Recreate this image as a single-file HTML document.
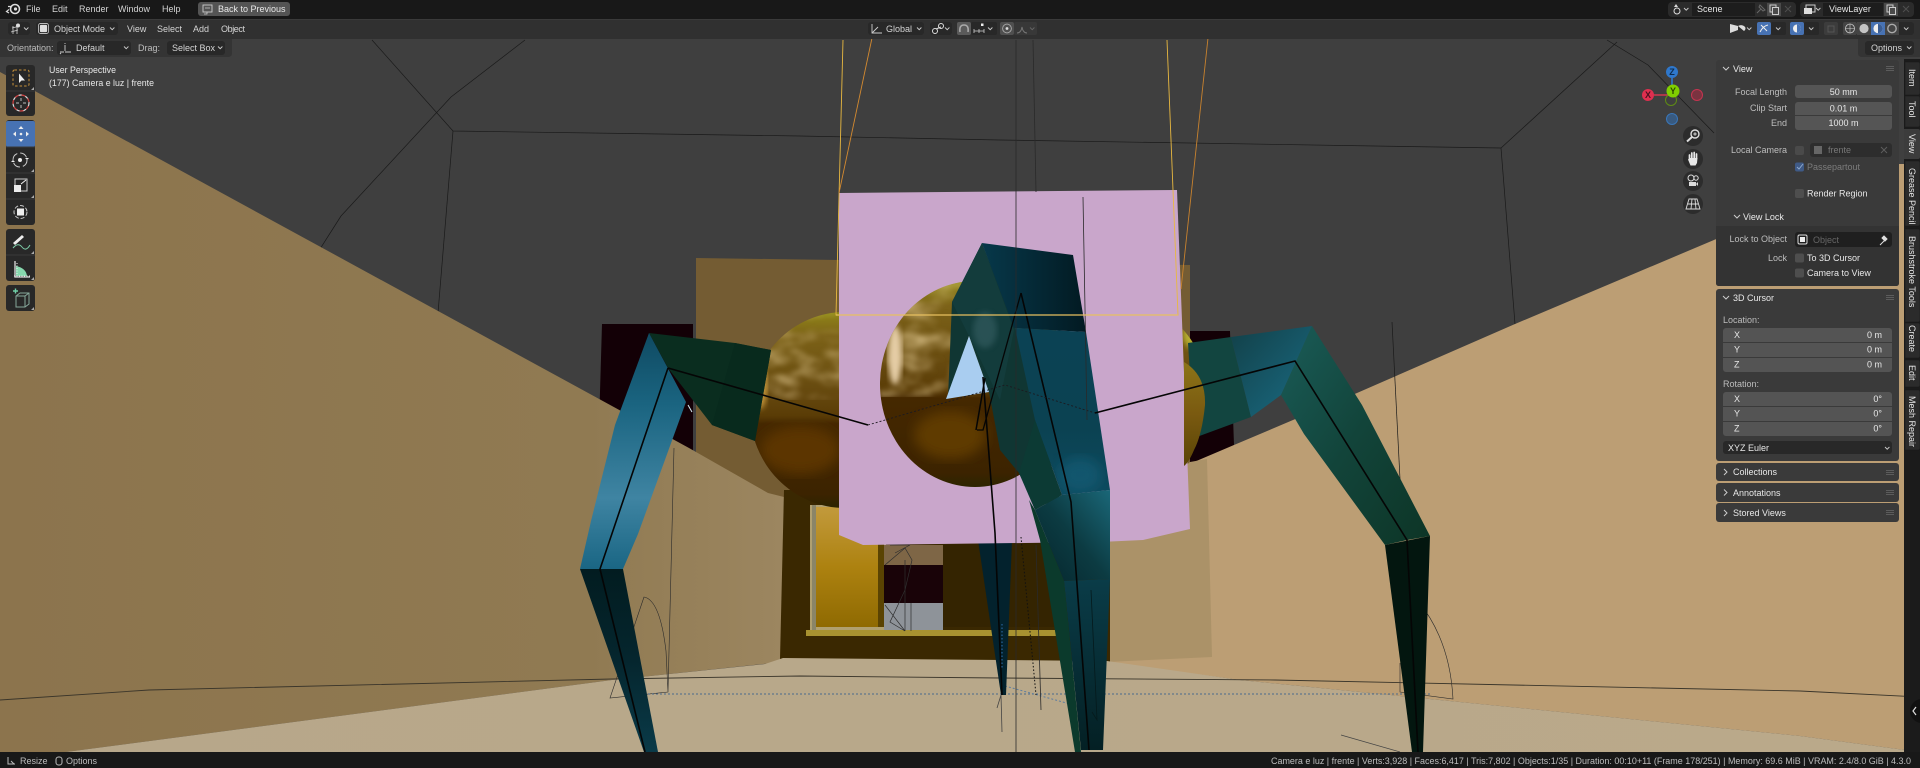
<!DOCTYPE html>
<html><head><meta charset="utf-8"><title>Blender</title>
<style>
html,body{margin:0;padding:0;background:#181818;width:1920px;height:768px;overflow:hidden}
svg{display:block}
text{font-family:"Liberation Sans",sans-serif;font-size:9px;fill:#d4d4d4}
.d{fill:#bdbdbd}.w{fill:#e8e8e8}.g{fill:#8a8a8a}
.m{text-anchor:middle}.e{text-anchor:end}
.wr{fill:none;stroke:#1a1a1a;stroke-width:.7}
.ic{fill:none;stroke:#ddd;stroke-width:1}
</style></head><body>
<svg width="1920" height="768" viewBox="0 0 1920 768" xmlns="http://www.w3.org/2000/svg">
<defs>
<linearGradient id="lw" x1="0" y1="0" x2="1" y2="0"><stop offset="0" stop-color="#8c744d"/><stop offset=".75" stop-color="#907a52"/><stop offset="1" stop-color="#9c8660"/></linearGradient>
<linearGradient id="fl" x1="0" y1="0" x2="1" y2="0"><stop offset="0" stop-color="#b7a78a"/><stop offset="1" stop-color="#baa98a"/></linearGradient>
<linearGradient id="sph1" x1="0" y1="0" x2="0" y2="1"><stop offset="0" stop-color="#8f8c10"/><stop offset=".04" stop-color="#8a7a18"/><stop offset=".12" stop-color="#7c6218"/><stop offset=".42" stop-color="#65480e"/><stop offset=".53" stop-color="#5a3c06"/><stop offset=".57" stop-color="#452800"/><stop offset=".93" stop-color="#3c2300"/><stop offset="1" stop-color="#2c2400"/></linearGradient>
<linearGradient id="gold" x1="0" y1="0" x2="0" y2="1"><stop offset="0" stop-color="#c29a3c"/><stop offset=".5" stop-color="#ad8210"/><stop offset="1" stop-color="#8f6a02"/></linearGradient>
<linearGradient id="legU" x1="0" y1="0" x2="0" y2="1"><stop offset="0" stop-color="#0f4a62"/><stop offset=".3" stop-color="#1a6480"/><stop offset=".7" stop-color="#3f84a2"/><stop offset="1" stop-color="#1a6684"/></linearGradient>
<linearGradient id="legL" x1="0" y1="0" x2="0" y2="1"><stop offset="0" stop-color="#021c20"/><stop offset=".5" stop-color="#05262e"/><stop offset="1" stop-color="#0a3a48"/></linearGradient>
<linearGradient id="cTop" x1="0" y1="0" x2="1" y2="0"><stop offset="0" stop-color="#07384a"/><stop offset="1" stop-color="#021a22"/></linearGradient>
<linearGradient id="cMid" x1="0" y1="0" x2="0" y2="1"><stop offset="0" stop-color="#0b4254"/><stop offset=".6" stop-color="#0b4252"/><stop offset="1" stop-color="#0d4a5e"/></linearGradient>
<linearGradient id="cLow" x1="1" y1="0" x2="0" y2="1"><stop offset="0" stop-color="#1a6778"/><stop offset=".5" stop-color="#0c3b42"/><stop offset="1" stop-color="#05252c"/></linearGradient>
<linearGradient id="cBot" x1="0" y1="0" x2="0" y2="1"><stop offset="0" stop-color="#0a3c48"/><stop offset="1" stop-color="#042024"/></linearGradient>
<linearGradient id="rLeg" x1="0" y1="0" x2="1" y2="1"><stop offset="0" stop-color="#1a5c58"/><stop offset=".5" stop-color="#12443a"/><stop offset="1" stop-color="#0d3526"/></linearGradient>
<linearGradient id="rArm" x1="0" y1="0" x2="1" y2="1"><stop offset="0" stop-color="#124048"/><stop offset="1" stop-color="#1a6c84"/></linearGradient>
<linearGradient id="cres" x1="0" y1="0" x2="0" y2="1"><stop offset="0" stop-color="#8c7418"/><stop offset=".5" stop-color="#7a5a10"/><stop offset="1" stop-color="#5a4406"/></linearGradient>
<filter id="b3"><feGaussianBlur stdDeviation="3"/></filter>
<filter id="b6"><feGaussianBlur stdDeviation="6"/></filter>
<filter id="cloud" x="0" y="0" width="100%" height="100%">
<feTurbulence type="fractalNoise" baseFrequency=".03 .06" numOctaves="3" seed="7"/>
<feColorMatrix values="0 0 0 0 .78  0 0 0 0 .6  0 0 0 0 .3  2.2 0 0 0 -.95"/>
<feGaussianBlur stdDeviation="2"/>
</filter>
<clipPath id="cs"><ellipse cx="975" cy="384" rx="95" ry="103"/></clipPath>
<clipPath id="ls"><ellipse cx="845" cy="410" rx="95" ry="98"/></clipPath>
<clipPath id="rs"><ellipse cx="1110" cy="392" rx="97" ry="95"/></clipPath>
<clipPath id="cm"><polygon points="1015,328 1086,332 1110,490 1062,495"/></clipPath>
</defs>

<!-- viewport background -->
<rect width="1920" height="768" fill="#3f3f3f"/>
<g class="wr">
<path d="M372 40L453 131L800 136L1000 140L1501 148L1515 324"/>
<path d="M525 40L451 97L341 216L250 359L186 515L149 690L148 752"/>
<path d="M453 131L438 313"/>
<path d="M1501 148L1617 42"/>
<path d="M1607 40L1648 65L1714 133"/>
</g>

<!-- back tan square and maroon -->
<polygon points="602,324 693,324 693,460 598,460" fill="#130006"/>
<polygon points="696,258 1190,265 1190,500 696,500" fill="#745c33"/>
<polygon points="1190,331 1230,331 1234,445 1190,465" fill="#130006"/>

<!-- left wall -->
<polygon points="0,72 689,448 768,493 784,497 782,662 612,680 66,752 0,752" fill="url(#lw)"/>
<!-- right wall -->
<polygon points="1920,153 1515,324 1357,393 1293,420 1234,445 1194,462 1194,530 1110,540 1107,662 1240,680 1800,736 1920,752" fill="#bc9e74"/>
<polygon points="1190,462 1207,459 1212,657 1107,662 1107,530" fill="#ab9268"/>

<!-- window frame -->
<polygon points="784,490 1110,490 1110,662 780,659" fill="#3a2801"/>
<rect x="810" y="505" width="76" height="131" fill="#b0a070"/>
<rect x="812" y="505" width="4" height="127" fill="#8a8568"/>
<rect x="816" y="507" width="62" height="120" fill="url(#gold)"/>
<rect x="878" y="507" width="6" height="120" fill="#5a4302"/>
<rect x="884" y="545" width="59" height="20" fill="#7e6646"/>
<rect x="884" y="565" width="59" height="38" fill="#190308"/>
<rect x="884" y="603" width="59" height="28" fill="#8e9399"/>
<rect x="943" y="543" width="112" height="84" fill="#342401"/>
<polygon points="806,630 1060,630 1056,636 806,636" fill="#a89230"/>
<g stroke="#2e2e2e" stroke-width=".7" fill="none"><path d="M885 565L905 548L912 560L905 590L890 622L905 631M895 553L910 545L890 545M885 605L905 631M905 560V631M911 603V631"/></g>

<!-- floor -->
<polygon points="66,752 612,680 765,664 783,658 1107,661 1240,680 1800,736 1920,752" fill="url(#fl)"/>

<!-- back spheres -->
<ellipse cx="845" cy="410" rx="95" ry="98" fill="url(#sph1)"/>
<g clip-path="url(#ls)">
<rect x="750" y="312" width="95" height="88" filter="url(#cloud)" opacity=".7"/>
<ellipse cx="760" cy="385" rx="7" ry="24" fill="#c8983a" filter="url(#b3)"/>
<ellipse cx="800" cy="450" rx="40" ry="24" fill="#5c3606" filter="url(#b6)"/>
</g>
<ellipse cx="1110" cy="392" rx="97" ry="95" fill="url(#sph1)"/>
<g clip-path="url(#rs)"><ellipse cx="1195" cy="335" rx="12" ry="14" fill="#b8b030" filter="url(#b3)"/></g>

<!-- wires behind -->
<path d="M674 448L668 692L610 698L644 597Q660 600 666 651L668 692" fill="none" stroke="#2a2a2a" stroke-width=".6"/>
<path d="M1400 663L1400 692L1453 699Q1450 640 1418 601" fill="none" stroke="#2a2a2a" stroke-width=".6"/>
<path d="M1392 322L1400 479" class="wr"/>

<!-- horizontal floor line -->
<path d="M0 700L149 690L612 679L800 676L1000 678L1275 680L1800 691L1920 697" fill="none" stroke="#3a352a" stroke-width=".9"/>
<path d="M640 694H1430" fill="none" stroke="#4a6a8c" stroke-width="1" stroke-dasharray="2 2"/>
<path d="M1005 686L1070 704" fill="none" stroke="#5b7ca0" stroke-width="1" stroke-dasharray="2 2"/>
<path d="M1001 695L1002 732M1001 695L997 708" fill="none" stroke="#444" stroke-width=".8"/>
<path d="M1341 735L1400 752" fill="none" stroke="#444" stroke-width=".7"/>

<!-- back thin center leg -->
<polygon points="978,540 1012,540 1006,695 1001,695" fill="#03222d"/>

<!-- pink plane -->
<polygon points="839,193 1177,190 1190,529 1143,540 1100,542 863,545 839,535" fill="#c9a6cb"/>

<!-- center sphere -->
<ellipse cx="975" cy="384" rx="95" ry="103" fill="url(#sph1)"/>
<g clip-path="url(#cs)">
<rect x="880" y="281" width="190" height="116" filter="url(#cloud)" opacity=".7"/>
<ellipse cx="895" cy="355" rx="7" ry="30" fill="#e4cca4" filter="url(#b3)"/>
<ellipse cx="950" cy="435" rx="36" ry="24" fill="#5e3a04" filter="url(#b6)"/>
</g>

<!-- center leg -->
<polygon points="982,243 952,302 948,398 969,336 989,392 1000,450 1019,473 1035,507 1060,500 1020,340" fill="#103633"/>
<polygon points="982,243 952,302 969,336 1000,400 1014,330" fill="#133c3c"/>
<ellipse cx="985" cy="330" rx="12" ry="18" fill="#3a6468" opacity=".55" filter="url(#b3)"/>
<polygon points="969,336 946,399 989,392" fill="#a9cdf0"/>
<polygon points="982,243 1073,255 1086,332 1014,328" fill="url(#cTop)"/>
<polygon points="1015,328 1086,332 1110,490 1062,495 1035,420" fill="url(#cMid)"/>
<ellipse cx="1080" cy="475" rx="22" ry="18" fill="#16607a" opacity=".6" filter="url(#b6)" clip-path="url(#cm)"/>
<polygon points="1035,510 1062,495 1110,490 1110,579 1064,581" fill="url(#cLow)"/>
<polygon points="1064,581 1110,579 1103,750 1081,750" fill="url(#cBot)"/>
<polygon points="1029,500 1035,510 1064,581 1081,752 1075,752 1040,540" fill="#0b3a2c"/>
<polygon points="1019,473 1035,510 1062,495 1035,420" fill="#0c3a34"/>
<path d="M1091 590L1097 720L1092 712" fill="none" stroke="#051a1c" stroke-width=".8"/>

<!-- left leg -->
<polygon points="649,333 735,343 771,350 755,441 712,425 668,368" fill="#0a2d1f"/>
<polygon points="735,343 771,350 755,441 712,425" fill="#082a1d"/>
<polygon points="649,333 686,402 638,534 623,569 580,569 591,521 615,425" fill="url(#legU)"/>
<polygon points="580,569 623,569 658,752 644,752" fill="url(#legL)"/>
<path d="M688 405L692 412" stroke="#d8f0f8" stroke-width="1"/>

<!-- right arm and leg -->
<polygon points="1188,343 1231,337 1251,417 1194,438" fill="#124540"/>
<polygon points="1231,337 1312,326 1296,362 1281,395 1251,417" fill="url(#rArm)"/>
<polygon points="1312,326 1362,405 1430,536 1407,540 1385,545 1304,434 1281,395" fill="url(#rLeg)"/>
<polygon points="1385,545 1430,536 1423,752 1412,752" fill="#03160f"/>
<!-- sphere crescent right of pink -->
<path d="M1184 362Q1206 375 1205 405Q1202 435 1194 450Q1189 462 1184 466Z" fill="url(#cres)"/>

<!-- bones -->
<g fill="none" stroke="#050505" stroke-width="1.600">
<path d="M668 368L868 425"/>
<path d="M668 368L600 569L645 752"/>
<path d="M1095 413L1295 361L1407 540L1418 752"/>
<path d="M1021 293L1071 502L1089 750"/>
<path d="M1021 293L983 430L977 430" stroke-width="1.300"/>
<path d="M983 377L995 533L1002 695"/>
<path d="M985 378L976 430" stroke-width="1.500"/>
</g>
<path d="M868 425L1005 385L1095 413" fill="none" stroke="#1c1a20" stroke-width=".9" stroke-dasharray="2 2"/>
<path d="M1021 537L1036 695" fill="none" stroke="#111" stroke-width="1" stroke-dasharray="1.500 2"/>
<path d="M1002 624V668" fill="none" stroke="#2f6fae" stroke-width="1" stroke-dasharray="1.500 2"/>

<!-- vertical wires -->
<path d="M1016 40V768" fill="none" stroke="#2a2a2a" stroke-width=".8"/>
<path d="M1033 40L1036 192M1083 197L1087 420M1036 545L1041 710" fill="none" stroke="#2a2a2a" stroke-width=".8"/>

<!-- camera frame -->
<g fill="none">
<path d="M843 40L836 315H1178L1167 40" stroke="#e8b840" stroke-width=".9"/>
<path d="M836 315H1178" stroke="#e8c060" stroke-width="1.200"/>
<path d="M872 38L839 193" stroke="#d48a30" stroke-width=".9"/>
<path d="M1208 38L1181 289" stroke="#c8822e" stroke-width=".9"/>
</g>

<!-- ============ UI ============ -->
<rect width="1920" height="19" fill="#181818"/>
<rect y="19" width="1920" height="20" fill="#303030"/>
<rect y="19" width="1920" height="1" fill="#3a3a3a"/>
<path d="M0 39H232V53Q232 57 228 57H0Z" fill="#333" opacity=".9"/>
<path d="M1920 39H1858V53Q1858 57 1862 57H1920Z" fill="#333" opacity=".9"/>

<!-- blender logo -->
<g><circle cx="15" cy="9" r="4.500" fill="none" stroke="#ddd" stroke-width="1.600"/><circle cx="15.500" cy="9" r="1.600" fill="#ddd"/><path d="M8 6.500H12M9 9.500L6.500 11.500L9 13" stroke="#ddd" stroke-width="1.200" fill="none"/></g>
<text x="26" y="12">File</text><text x="52" y="12">Edit</text><text x="79" y="12">Render</text><text x="118" y="12">Window</text><text x="162" y="12">Help</text>
<rect x="198" y="2" width="92" height="14" rx="3" fill="#545454"/>
<rect x="203" y="5" width="9" height="7" fill="none" stroke="#ccc" stroke-width=".9"/><path d="M205 8h5M207 12v2h-3" stroke="#ccc" stroke-width=".8" fill="none"/>
<text x="218" y="12" class="w">Back to Previous</text>

<!-- header row left -->
<rect x="8" y="22" width="22" height="13" rx="3" fill="#282828"/>
<path d="M11 32L18 30M12 28L20 26M13 26V34M17 26V34" stroke="#ccc" stroke-width=".8" fill="none"/><circle cx="18" cy="25.500" r="2" fill="#ddd"/><path d="M24 27.500l2.200 2.200 2.200-2.200" stroke="#ccc" fill="none" stroke-width=".9"/>
<rect x="36" y="22" width="82" height="13" rx="3" fill="#282828"/>
<rect x="39.500" y="24.500" width="8" height="8" rx="1.500" fill="#ddd" stroke="#282828" stroke-width=".8"/><rect x="38.500" y="23.500" width="10" height="10" rx="2" fill="none" stroke="#bbb" stroke-width=".9"/>
<text x="54" y="32">Object Mode</text><path d="M110 27.500l2.200 2.200 2.200-2.200" stroke="#ccc" fill="none" stroke-width=".9"/>
<text x="127" y="32">View</text><text x="157" y="32">Select</text><text x="193" y="32">Add</text><text x="221" y="32" textLength="24">Object</text>

<!-- header row center -->
<rect x="868" y="22" width="56" height="13" rx="3" fill="#282828"/>
<path d="M872 24V33H882M872 33L878 27" stroke="#ccc" fill="none" stroke-width=".9"/>
<text x="886" y="32">Global</text><path d="M917 27.500l2.200 2.200 2.200-2.200" stroke="#ccc" fill="none" stroke-width=".9"/>
<rect x="930" y="22" width="22" height="13" rx="3" fill="#282828"/>
<circle cx="935" cy="31" r="2.500" class="ic"/><circle cx="941" cy="26" r="2.500" class="ic"/><path d="M936 29L941 27" class="ic"/><path d="M945 27.500l2.200 2.200 2.200-2.200" stroke="#ccc" fill="none" stroke-width=".9"/>
<rect x="957" y="22" width="14" height="13" rx="2" fill="#5a5a5a"/><path d="M960 32Q959 25 964 25Q969 25 968 32" fill="none" stroke="#aaa" stroke-width="1.600"/>
<rect x="971" y="22" width="26" height="13" rx="2" fill="#282828"/>
<path d="M974 31H984M974 29V33M979 29V33M984 29V33" stroke="#ccc" fill="none" stroke-width=".8"/><rect x="981" y="23.500" width="2.500" height="2.500" fill="#eee"/><path d="M988 27.500l2.200 2.200 2.200-2.200" stroke="#ccc" fill="none" stroke-width=".9"/>
<rect x="1000" y="22" width="14" height="13" rx="2" fill="#4f4f4f"/><circle cx="1007" cy="28.500" r="4.400" fill="none" stroke="#aaa" stroke-width=".9"/><circle cx="1007" cy="28.500" r="1.400" fill="#ddd"/>
<rect x="1014" y="22" width="23" height="13" rx="2" fill="#383838"/><path d="M1017 33Q1021 33 1022 27Q1023 33 1027 33" stroke="#777" fill="none" stroke-width=".9"/><path d="M1030 27.500l2.200 2.200 2.200-2.200" stroke="#666" fill="none" stroke-width=".9"/>

<!-- header row right -->
<path d="M1730 24l8 2v4l-8 3zM1738 26a4 3 0 1 1 6 5" fill="#ddd"/><path d="M1747 27.500l2.200 2.200 2.200-2.200" stroke="#ccc" fill="none" stroke-width=".9"/>
<rect x="1757" y="22" width="14" height="13" rx="2" fill="#4772b3"/><path d="M1760 32Q1763 26 1768 25M1761 25l6 6" stroke="#eee" fill="none" stroke-width="1"/>
<rect x="1771" y="22" width="15" height="13" rx="2" fill="#282828"/><path d="M1776 27.500l2.200 2.200 2.200-2.200" stroke="#ccc" fill="none" stroke-width=".9"/>
<rect x="1790" y="22" width="14" height="13" rx="2" fill="#4772b3"/><circle cx="1797" cy="28.500" r="4" fill="#eee"/><path d="M1797 24.500a4 4 0 0 1 0 8z" fill="#4772b3"/>
<rect x="1804" y="22" width="15" height="13" rx="2" fill="#282828"/><path d="M1809 27.500l2.200 2.200 2.200-2.200" stroke="#ccc" fill="none" stroke-width=".9"/>
<rect x="1824" y="22" width="14" height="13" rx="2" fill="#3c3c3c"/><rect x="1828" y="26" width="6" height="6" fill="none" stroke="#555"/>
<rect x="1843" y="22" width="71" height="13" rx="3" fill="#282828"/>
<rect x="1843" y="22" width="14" height="13" rx="2" fill="#444"/>
<circle cx="1850" cy="28.500" r="4.500" fill="none" stroke="#ccc" stroke-width=".8"/><path d="M1845.500 28.500h9M1850 24v9" stroke="#ccc" stroke-width=".6"/>
<rect x="1857" y="22" width="14" height="13" fill="#444"/><circle cx="1864" cy="28.500" r="4.600" fill="#c4c4c4"/>
<rect x="1871" y="22" width="14" height="13" fill="#4772b3"/><circle cx="1878" cy="28.500" r="4.600" fill="#eee"/><path d="M1878 23.900a4.600 4.600 0 0 1 0 9.200z" fill="#3a5c92"/>
<rect x="1885" y="22" width="14" height="13" fill="#444"/><circle cx="1892" cy="28.500" r="4.200" fill="none" stroke="#aaa" stroke-width="1.400"/>
<path d="M1904 27.500l2.200 2.200 2.200-2.200" stroke="#ccc" fill="none" stroke-width=".9"/>

<!-- Top right scene -->
<rect x="1668" y="2" width="128" height="15" rx="4" fill="#2b2b2b"/>
<rect x="1692" y="3" width="63" height="13" fill="#1d1d1d"/>
<circle cx="1677" cy="11" r="3" fill="none" stroke="#ddd"/><path d="M1674 7l2-3 2 3" fill="#ddd"/><path d="M1684 8l2.200 2.200 2.200-2.200" stroke="#ccc" fill="none" stroke-width=".9"/>
<text x="1697" y="12" class="w">Scene</text>
<path d="M1757 13l4-4M1760 5l5 5-2 1-4-4z" stroke="#666" fill="none"/>
<rect x="1767" y="3" width="14" height="13" fill="#4a4a4a"/><rect x="1770" y="5" width="6" height="7" fill="none" stroke="#ccc"/><rect x="1772.500" y="7.500" width="6" height="7" fill="#4a4a4a" stroke="#ccc"/>
<path d="M1785 6l6 6M1791 6l-6 6" stroke="#4e4e4e"/>
<rect x="1800" y="2" width="114" height="15" rx="4" fill="#2b2b2b"/>
<rect x="1823" y="3" width="60" height="13" fill="#1d1d1d"/>
<rect x="1806" y="5" width="9" height="7" fill="none" stroke="#ccc"/><rect x="1804" y="8" width="8" height="6" fill="#ddd"/><path d="M1816 8l2.200 2.200 2.200-2.200" stroke="#ccc" fill="none" stroke-width=".9"/>
<text x="1829" y="12" class="w">ViewLayer</text>
<rect x="1884" y="3" width="14" height="13" fill="#4a4a4a"/><rect x="1887" y="5" width="6" height="7" fill="none" stroke="#ccc"/><rect x="1889.500" y="7.500" width="6" height="7" fill="#4a4a4a" stroke="#ccc"/>
<path d="M1903 6l6 6M1909 6l-6 6" stroke="#4e4e4e"/>

<!-- tool settings -->
<text x="7" y="51" class="d">Orientation:</text>
<rect x="57" y="41" width="74" height="14" rx="3" fill="#282828"/>
<path d="M65 45v6M60 52h4M65 52h6M61 54l-1-1M65 43v1" stroke="#ccc" stroke-width=".9" fill="none"/>
<text x="76" y="51">Default</text><path d="M124 46.500l2.200 2.200 2.200-2.200" stroke="#ccc" fill="none" stroke-width=".9"/>
<text x="138" y="51" class="d">Drag:</text>
<rect x="167" y="41" width="58" height="14" rx="3" fill="#282828"/>
<text x="172" y="51">Select Box</text><path d="M218 46.500l2.200 2.200 2.200-2.200" stroke="#ccc" fill="none" stroke-width=".9"/>
<rect x="1865" y="41" width="49" height="14" rx="3" fill="#282828"/>
<text x="1871" y="51">Options</text><path d="M1907 46.500l2.200 2.200 2.200-2.200" stroke="#ccc" fill="none" stroke-width=".9"/>

<!-- overlay text -->
<text x="49" y="73" class="w" style="font-size:8.800px">User Perspective</text>
<text x="49" y="86" class="w" style="font-size:8.800px">(177) Camera e luz | frente</text>

<!-- toolbar -->
<rect x="6" y="65" width="29" height="51" rx="3" fill="#282828"/>
<rect x="6" y="120" width="29" height="105" rx="3" fill="#282828"/>
<rect x="6" y="229" width="29" height="52" rx="3" fill="#282828"/>
<rect x="6" y="285" width="29" height="26" rx="3" fill="#282828"/>
<rect x="6" y="121" width="29" height="26" rx="2" fill="#4772b3"/>
<path d="M6 91H35M6 173H35M6 199H35M6 147H35M6 255H35" stroke="#3a3a3a"/>
<rect x="13" y="70" width="16" height="16" rx="1.500" fill="none" stroke="#c6913a" stroke-dasharray="2.500 2"/>
<path d="M19 73.500V83L21.500 80.500L25 80.500Z" fill="#eee"/>
<circle cx="21" cy="103" r="8" fill="none" stroke="#ddd" stroke-width="1.200" stroke-dasharray="4 3"/><circle cx="21" cy="103" r="8" fill="none" stroke="#d04040" stroke-width="1.200" stroke-dasharray="4 3" stroke-dashoffset="4"/>
<path d="M21 98v3M21 105v3M16 103h3M23 103h3" stroke="#bbb"/>
<g fill="#eee"><path d="M21 126l-2.500 3h5zM21 142l-2.500-3h5zM13 134l3-2.500v5zM29 134l-3-2.500v5z"/><circle cx="21" cy="134" r="1.300"/></g>
<circle cx="20" cy="160" r="7" fill="none" stroke="#ccc" stroke-dasharray="8 3"/><circle cx="20" cy="160" r="2" fill="#eee"/><path d="M13 160l-2 2h4zM27 160l-2-2h4z" fill="#eee"/>
<rect x="15" y="179" width="12" height="12" fill="none" stroke="#ccc"/><rect x="14" y="185" width="7" height="7" fill="#eee"/><path d="M21 184l5-4" stroke="#eee"/>
<circle cx="20.500" cy="212" r="6.500" fill="none" stroke="#ccc" stroke-dasharray="4 2"/><rect x="17" y="208.500" width="7" height="7" fill="#eee"/>
<path d="M13 243l9-8 2 2-9 8z" fill="#eee"/><path d="M13 248q5-6 9-1t8-2" stroke="#7dcca8" fill="none"/>
<path d="M15 261V277H30" stroke="#ddd" fill="none" stroke-width="1.300"/><path d="M16 266Q26 268 27 276H16z" fill="#87d8ae"/>
<path d="M14 276h16M17 263v12" stroke="#eee" stroke-dasharray="1 1.500"/>
<path d="M13 291h5M15.500 288.500v5" stroke="#6fd0a8" stroke-width="1.400"/>
<path d="M16 296l4-3h9v11l-4 3h-9zM16 296h9v11M25 296l4-3" fill="none" stroke="#86a79a"/>
<g fill="#aaa"><path d="M34 90l-3 0 3-3zM34 172l-3 0 3-3zM34 198l-3 0 3-3zM34 254l-3 0 3-3zM34 280l-3 0 3-3zM34 310l-3 0 3-3z"/></g>

<!-- gizmo -->
<line x1="1672" y1="78" x2="1672" y2="91" stroke="#2f78cc" stroke-width="1.600"/>
<line x1="1654" y1="95" x2="1673" y2="95" stroke="#d2364f" stroke-width="1.600"/>
<circle cx="1697" cy="95" r="5.500" fill="#7a3340" stroke="#c63450" stroke-width="1"/>
<circle cx="1672" cy="119" r="5.500" fill="#385a80" stroke="#3a76b8" stroke-width="1"/>
<circle cx="1671" cy="100" r="5.500" fill="none" stroke="#5e8c14" stroke-width="1"/>
<circle cx="1672" cy="72" r="6" fill="#2f78cc"/><text x="1672" y="75" class="m" style="fill:#0d2c50;font-weight:bold">Z</text>
<circle cx="1648" cy="95" r="6" fill="#df2f4f"/><text x="1648" y="98" class="m" style="fill:#4a1020;font-weight:bold">X</text>
<circle cx="1673" cy="91" r="6.500" fill="#80d000"/><text x="1673" y="94" class="m" style="fill:#2c4a00;font-weight:bold">Y</text>
<g fill="#2c2c2c"><circle cx="1693" cy="136" r="10"/><circle cx="1693" cy="159" r="10"/><circle cx="1693" cy="181" r="10"/><circle cx="1693" cy="204" r="10"/></g>
<circle cx="1695" cy="134" r="4" fill="none" stroke="#ddd" stroke-width="1.400"/><path d="M1692 137l-5 4.500" stroke="#ddd" stroke-width="2"/><path d="M1695 132.300v3.400M1693.300 134h3.400" stroke="#ddd" stroke-width=".9"/>
<path d="M1689.500 158.500V155M1691.800 158V153M1694.200 158V152.500M1696.500 158.500V154" stroke="#e8e8e8" stroke-width="1.700" stroke-linecap="round" fill="none"/><path d="M1688 159.500l1.500-1.500h8l-.5 5-1.500 2.500h-5z" fill="#e8e8e8"/>
<circle cx="1691" cy="178" r="3" fill="none" stroke="#ddd"/><circle cx="1696" cy="178" r="2.200" fill="none" stroke="#ddd"/><rect x="1689" y="182" width="7" height="4" fill="#ddd"/><path d="M1698 182v4l-2-2z" fill="#ddd"/>
<path d="M1689 199h8l3 10h-14zM1688 204h10M1692 199l-1 10M1695 199l1 10" fill="none" stroke="#ddd" stroke-width=".9"/>

<!-- sidebar backdrops -->
<rect x="1904" y="59" width="16" height="693" fill="#1b1b1b"/>
<rect x="1899" y="59" width="5" height="105" fill="#3f3f3f"/>
<rect x="1716" y="60" width="183" height="226" rx="3" fill="#3a3a3a"/>
<path d="M1716 226H1899V283Q1899 286 1896 286H1719Q1716 286 1716 283Z" fill="#333"/>
<rect x="1716" y="289" width="183" height="172" rx="3" fill="#3a3a3a"/>
<rect x="1716" y="463" width="183" height="18" rx="3" fill="#3a3a3a"/>
<rect x="1716" y="483" width="183" height="19" rx="3" fill="#3a3a3a"/>
<rect x="1716" y="503" width="183" height="19" rx="3" fill="#3a3a3a"/>

<!-- View panel -->
<path d="M1723 67l3 3 3-3" stroke="#ccc" fill="none"/>
<text x="1733" y="72" class="w">View</text>
<g fill="#5c5c5c"><rect x="1886" y="66" width="8" height="1"/><rect x="1886" y="68" width="8" height="1"/><rect x="1886" y="70" width="8" height="1"/>
<rect x="1886" y="295" width="8" height="1"/><rect x="1886" y="297" width="8" height="1"/><rect x="1886" y="299" width="8" height="1"/>
<rect x="1886" y="470" width="8" height="1"/><rect x="1886" y="472" width="8" height="1"/><rect x="1886" y="474" width="8" height="1"/>
<rect x="1886" y="490" width="8" height="1"/><rect x="1886" y="492" width="8" height="1"/><rect x="1886" y="494" width="8" height="1"/>
<rect x="1886" y="510" width="8" height="1"/><rect x="1886" y="512" width="8" height="1"/><rect x="1886" y="514" width="8" height="1"/></g>
<text x="1787" y="95" class="e d">Focal Length</text>
<rect x="1795" y="85" width="97" height="13" rx="3" fill="#555"/><text x="1843.500" y="95" class="m w">50 mm</text>
<text x="1787" y="111" class="e d">Clip Start</text>
<path d="M1795 105a3 3 0 0 1 3-3h91a3 3 0 0 1 3 3v10h-97z" fill="#555"/><text x="1843.500" y="111.500" class="m w">0.01 m</text>
<text x="1787" y="126" class="e d">End</text>
<path d="M1795 116h97v11a3 3 0 0 1-3 3h-91a3 3 0 0 1-3-3z" fill="#555"/><text x="1843.500" y="126" class="m w">1000 m</text>

<text x="1787" y="153" class="e d">Local Camera</text>
<rect x="1795" y="146" width="9" height="9" rx="2" fill="#4a4a4a"/>
<rect x="1810" y="143" width="82" height="14" rx="3" fill="#2d2d2d"/>
<rect x="1814" y="146" width="8" height="8" fill="#666"/><text x="1828" y="153" style="fill:#777">frente</text>
<path d="M1881 147l6 6M1887 147l-6 6" stroke="#5e5e5e"/>
<rect x="1795" y="162.500" width="9" height="9" rx="2" fill="#3f5a86"/><path d="M1797 167l2 2 4-5" stroke="#8ea8cc" fill="none"/>
<text x="1807" y="170" style="fill:#7c7c7c">Passepartout</text>
<rect x="1795" y="189" width="9" height="9" rx="2" fill="#4e4e4e"/><text x="1807" y="196.500" class="w">Render Region</text>
<path d="M1734 215l3 3 3-3" stroke="#ccc" fill="none"/>
<text x="1743" y="220" class="w">View Lock</text>
<text x="1787" y="242" class="e d">Lock to Object</text>
<rect x="1795" y="232" width="97" height="15" rx="3" fill="#1f1f1f"/>
<rect x="1798" y="235" width="9" height="9" rx="1.500" fill="none" stroke="#ddd"/><rect x="1800" y="237" width="5" height="5" fill="#eee"/>
<text x="1813" y="243" style="fill:#666">Object</text>
<path d="M1880 245l5-5M1884 236l3 3-2 2-3-3z" stroke="#ddd" fill="#ddd"/>
<text x="1787" y="261" class="e d">Lock</text>
<rect x="1795" y="253.500" width="9" height="9" rx="2" fill="#4e4e4e"/><text x="1807" y="261" class="w">To 3D Cursor</text>
<rect x="1795" y="268.500" width="9" height="9" rx="2" fill="#4e4e4e"/><text x="1807" y="276" class="w">Camera to View</text>

<!-- 3D Cursor -->
<path d="M1723 296l3 3 3-3" stroke="#ccc" fill="none"/>
<text x="1733" y="301" class="w">3D Cursor</text>
<text x="1723" y="323" class="d">Location:</text>
<path d="M1723 331a3 3 0 0 1 3-3h163a3 3 0 0 1 3 3v11h-169z" fill="#545454"/>
<rect x="1723" y="343" width="169" height="14" fill="#545454"/>
<path d="M1723 358h169v11a3 3 0 0 1-3 3h-163a3 3 0 0 1-3-3z" fill="#545454"/>
<text x="1734" y="338" class="w">X</text><text x="1734" y="352.500" class="w">Y</text><text x="1734" y="367.500" class="w">Z</text>
<text x="1882" y="338" class="e w">0 m</text><text x="1882" y="352.500" class="e w">0 m</text><text x="1882" y="367.500" class="e w">0 m</text>
<text x="1723" y="387" class="d">Rotation:</text>
<path d="M1723 395a3 3 0 0 1 3-3h163a3 3 0 0 1 3 3v11h-169z" fill="#545454"/>
<rect x="1723" y="407" width="169" height="14" fill="#545454"/>
<path d="M1723 422h169v11a3 3 0 0 1-3 3h-163a3 3 0 0 1-3-3z" fill="#545454"/>
<text x="1734" y="402" class="w">X</text><text x="1734" y="416.500" class="w">Y</text><text x="1734" y="431.500" class="w">Z</text>
<text x="1882" y="402" class="e w">0°</text><text x="1882" y="416.500" class="e w">0°</text><text x="1882" y="431.500" class="e w">0°</text>
<rect x="1723" y="441" width="169" height="13" rx="3" fill="#282828"/>
<text x="1728" y="451" class="w">XYZ Euler</text><path d="M1885 447l2.200 2.200 2.200-2.200" stroke="#ccc" fill="none" stroke-width=".9"/>

<path d="M1724 469l3 3-3 3" stroke="#ccc" fill="none"/><text x="1733" y="475" class="w">Collections</text>
<path d="M1724 489.500l3 3-3 3" stroke="#ccc" fill="none"/><text x="1733" y="496" class="w">Annotations</text>
<path d="M1724 510l3 3-3 3" stroke="#ccc" fill="none"/><text x="1733" y="516" class="w">Stored Views</text>

<!-- tabs -->
<g fill="#2b2b2b" stroke="#1b1b1b" stroke-width=".6">
<path d="M1905 62h13a2 2 0 0 1 2 2v29a2 2 0 0 1-2 2h-13z"/>
<path d="M1905 96h13a2 2 0 0 1 2 2v27a2 2 0 0 1-2 2h-13z"/>
<path d="M1905 161h13a2 2 0 0 1 2 2v61a2 2 0 0 1-2 2h-13z"/>
<path d="M1905 229h13a2 2 0 0 1 2 2v89a2 2 0 0 1-2 2h-13z"/>
<path d="M1905 323h13a2 2 0 0 1 2 2v31a2 2 0 0 1-2 2h-13z"/>
<path d="M1905 360h13a2 2 0 0 1 2 2v23a2 2 0 0 1-2 2h-13z"/>
<path d="M1905 390h13a2 2 0 0 1 2 2v56a2 2 0 0 1-2 2h-13z"/>
</g>
<path d="M1904 129h14a2 2 0 0 1 2 2v26a2 2 0 0 1-2 2h-14z" fill="#3c3c3c"/>
<g>
<text class="w" transform="translate(1909,69) rotate(90)">Item</text>
<text class="w" transform="translate(1909,101) rotate(90)">Tool</text>
<text class="w" transform="translate(1909,134) rotate(90)">View</text>
<text class="w" transform="translate(1909,168) rotate(90)">Grease Pencil</text>
<text class="w" transform="translate(1909,236) rotate(90)">Brushstroke Tools</text>
<text class="w" transform="translate(1909,325) rotate(90)">Create</text>
<text class="w" transform="translate(1909,365) rotate(90)">Edit</text>
<text class="w" transform="translate(1909,396) rotate(90)">Mesh Repair</text>
</g>

<!-- edge circle -->
<circle cx="1922" cy="711" r="12" fill="#111"/><path d="M1916 707l-3 4 3 4" stroke="#ddd" fill="none" stroke-width="1.200"/>

<!-- status bar -->
<rect y="752" width="1920" height="16" fill="#181818"/>
<path d="M8 757v7h7M11 761l3 3" stroke="#bbb" fill="none"/><text x="20" y="764" class="d">Resize</text>
<rect x="56" y="757" width="6" height="8" rx="2.500" fill="none" stroke="#bbb"/><text x="66" y="764" class="d">Options</text>
<text x="1271" y="764" class="d" textLength="640" lengthAdjust="spacingAndGlyphs">Camera e luz | frente | Verts:3,928 | Faces:6,417 | Tris:7,802 | Objects:1/35 | Duration: 00:10+11 (Frame 178/251) | Memory: 69.6 MiB | VRAM: 2.4/8.0 GiB | 4.3.0</text>
</svg>
</body></html>
